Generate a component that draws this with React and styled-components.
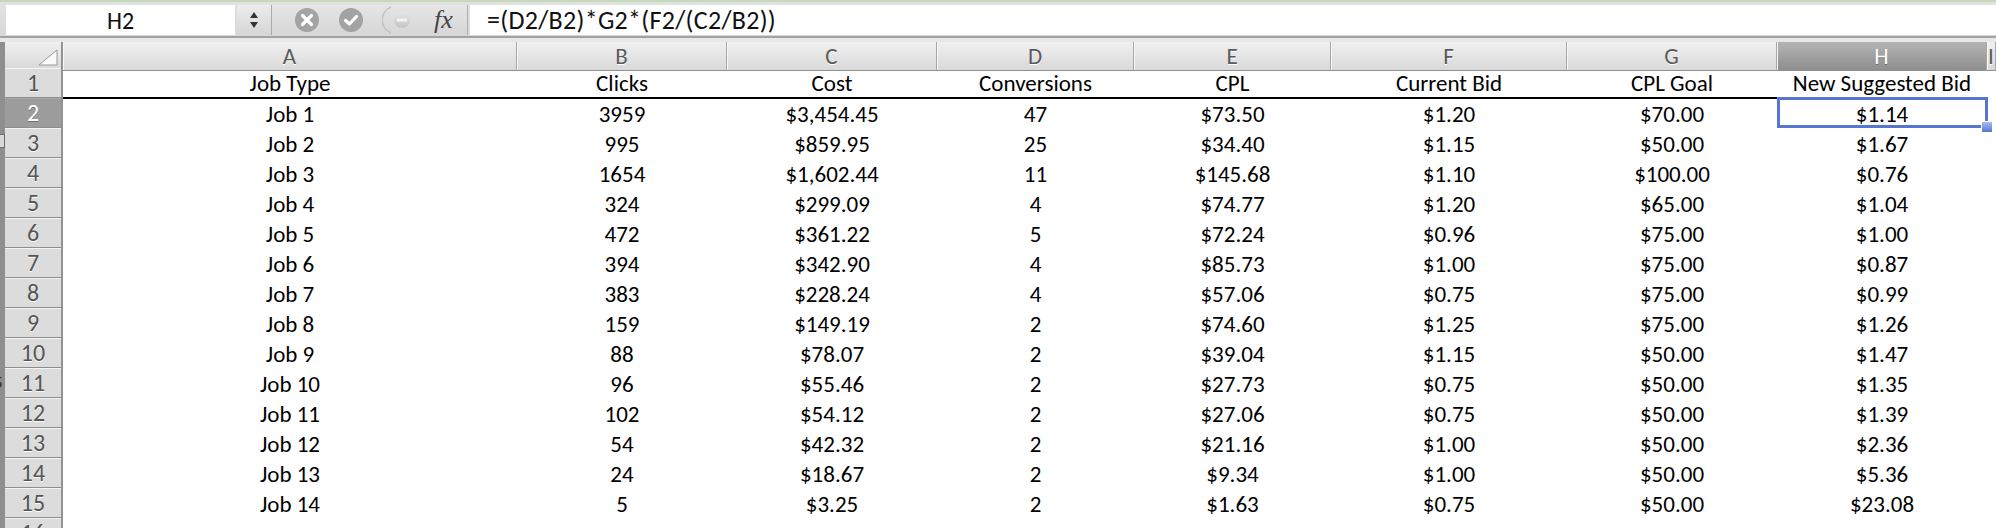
import React from 'react';
import styled, { createGlobalStyle } from 'styled-components';

const GlobalStyle = createGlobalStyle`
  html, body {
    margin: 0;
    padding: 0;
    background: #fff;
    overflow: hidden;
  }
  body {
    font-family: Carlito, Calibri, Lato, "Liberation Sans", sans-serif;
  }
`;

const COLS = '58px 454px 210px 210px 197px 197px 236px 210px 210px 1fr';

const columns = ['A', 'B', 'C', 'D', 'E', 'F', 'G', 'H', 'I'];

const headers = ['Job Type', 'Clicks', 'Cost', 'Conversions', 'CPL', 'Current Bid', 'CPL Goal', 'New Suggested Bid'];

const data = [
    ['Job 1', '3959', '$3,454.45', '47', '$73.50', '$1.20', '$70.00', '$1.14'],
    ['Job 2', '995', '$859.95', '25', '$34.40', '$1.15', '$50.00', '$1.67'],
    ['Job 3', '1654', '$1,602.44', '11', '$145.68', '$1.10', '$100.00', '$0.76'],
    ['Job 4', '324', '$299.09', '4', '$74.77', '$1.20', '$65.00', '$1.04'],
    ['Job 5', '472', '$361.22', '5', '$72.24', '$0.96', '$75.00', '$1.00'],
    ['Job 6', '394', '$342.90', '4', '$85.73', '$1.00', '$75.00', '$0.87'],
    ['Job 7', '383', '$228.24', '4', '$57.06', '$0.75', '$75.00', '$0.99'],
    ['Job 8', '159', '$149.19', '2', '$74.60', '$1.25', '$75.00', '$1.26'],
    ['Job 9', '88', '$78.07', '2', '$39.04', '$1.15', '$50.00', '$1.47'],
    ['Job 10', '96', '$55.46', '2', '$27.73', '$0.75', '$50.00', '$1.35'],
    ['Job 11', '102', '$54.12', '2', '$27.06', '$0.75', '$50.00', '$1.39'],
    ['Job 12', '54', '$42.32', '2', '$21.16', '$1.00', '$50.00', '$2.36'],
    ['Job 13', '24', '$18.67', '2', '$9.34', '$1.00', '$50.00', '$5.36'],
    ['Job 14', '5', '$3.25', '2', '$1.63', '$0.75', '$50.00', '$23.08'],
];

const App = () => {
    return (
        <React.Fragment>
            <GlobalStyle />
            <Window>
                <FormulaBar>
                    <NameBox>H2</NameBox>
                    <Stepper>
                        <svg width="12" height="22" viewBox="0 0 12 22">
                            <path d="M6 3 L10 9 L2 9 Z" fill="#333" />
                            <path d="M6 19 L10 13 L2 13 Z" fill="#333" />
                        </svg>
                    </Stepper>
                    <Tools>
                        <svg width="26" height="26" viewBox="0 0 26 26">
                            <circle cx="13" cy="13" r="12" fill="#a3a3a3" />
                            <path d="M8.5 8.5 L17.5 17.5 M17.5 8.5 L8.5 17.5" stroke="#fff" strokeWidth="3.2" strokeLinecap="round" />
                        </svg>
                        <svg width="26" height="26" viewBox="0 0 26 26">
                            <circle cx="13" cy="13" r="12" fill="#a3a3a3" />
                            <path d="M7.5 13.5 L11.5 17 L18.5 9.5" stroke="#fff" strokeWidth="3.2" fill="none" strokeLinecap="round" strokeLinejoin="round" />
                        </svg>
                        <svg width="32" height="30" viewBox="0 0 32 30">
                            <defs>
                                <linearGradient id="dim" x1="0" y1="0" x2="0" y2="1">
                                    <stop offset="0" stopColor="#e6e6e6" />
                                    <stop offset="1" stopColor="#c4c4c4" />
                                </linearGradient>
                            </defs>
                            <path d="M9 2 A14 14 0 0 0 9 28" stroke="#c2c2c2" strokeWidth="1.6" fill="none" />
                            <circle cx="20" cy="15" r="8" fill="url(#dim)" />
                            <rect x="15" y="13.5" width="10" height="3" fill="#f4f4f4" />
                        </svg>
                        <Fx>fx</Fx>
                    </Tools>
                    <FormulaInput>=(D2/B2)*G2*(F2/(C2/B2))</FormulaInput>
                </FormulaBar>
                <Divider />
                <Sheet>
                    <LeftEdge>
                        <Notch />
                        <Peek>s</Peek>
                    </LeftEdge>
                    <Grid>
                        <Row $header>
                            <Corner>
                                <svg width="22" height="18" viewBox="0 0 22 18">
                                    <path d="M20 1 L20 16 L2 16 Z" fill="#fafafa" stroke="#9a9a9a" strokeWidth="1" />
                                </svg>
                            </Corner>
                            {columns.map((c) => (
                                <ColHeader key={c} $selected={c === 'H'}>{c}</ColHeader>
                            ))}
                        </Row>
                        <Row>
                            <RowHeader>1</RowHeader>
                            {headers.map((h) => (
                                <Cell key={h} $underline>{h}</Cell>
                            ))}
                            <Cell />
                        </Row>
                        {data.map((r, i) => (
                            <Row key={i}>
                                <RowHeader $selected={i === 0}>{i + 2}</RowHeader>
                                {r.map((v, j) => (
                                    <Cell key={j}>{v}</Cell>
                                ))}
                                <Cell />
                            </Row>
                        ))}
                        <Row>
                            <RowHeader>16</RowHeader>
                        </Row>
                        <Selection>
                            <FillHandle />
                        </Selection>
                    </Grid>
                </Sheet>
            </Window>
        </React.Fragment>
    );
};

const Window = styled.div`
    width: 1996px;
    height: 528px;
    overflow: hidden;
    display: flex;
    flex-direction: column;
    background: #fff;
`;

const FormulaBar = styled.div`
    height: 36px;
    box-sizing: border-box;
    display: flex;
    align-items: stretch;
    padding: 3px 0 1px 6px;
    border-top: 2px solid #c4d8bb;
    background: linear-gradient(#e2e2e2, #d8d8d8);
`;

const NameBox = styled.div`
    width: 229px;
    background: #fff;
    display: flex;
    align-items: center;
    justify-content: center;
    font-size: 24px;
    color: #111;
`;

const Stepper = styled.div`
    width: 34px;
    margin-left: 2px;
    display: flex;
    align-items: center;
    justify-content: center;
    background: linear-gradient(#ececec, #d6d6d6);
    border-right: 1px solid #a9a9a9;
`;

const Tools = styled.div`
    width: 196px;
    display: flex;
    align-items: center;
    gap: 18px;
    padding-left: 22px;
    box-sizing: border-box;
    border-right: 1px solid #b0b0b0;
    background: linear-gradient(#e6e6e6, #d6d6d6);
`;

const Fx = styled.span`
    font-family: "Liberation Serif", "DejaVu Serif", serif;
    font-style: italic;
    font-size: 26px;
    color: #444;
    margin-left: 2px;
`;

const FormulaInput = styled.div`
    flex: 1;
    margin-left: 2px;
    background: #fff;
    display: flex;
    align-items: center;
    padding-left: 17px;
    font-size: 26px;
    letter-spacing: 0.3px;
    color: #111;
`;

const Divider = styled.div`
    height: 6px;
    border-top: 2px solid #a2a2a2;
    box-sizing: border-box;
    background: #e8e8e8;
`;

const Sheet = styled.div`
    flex: 1;
    display: flex;
    min-height: 0;
`;

const LeftEdge = styled.div`
    width: 5px;
    background: #8f8f8f;
    flex-shrink: 0;
    position: relative;
    overflow: hidden;
`;

const Notch = styled.div`
    position: absolute;
    left: -3px;
    top: 92px;
    width: 6px;
    height: 12px;
    border: 1px solid #6a6a6a;
    background: #d8d8d8;
`;

const Peek = styled.span`
    position: absolute;
    left: -7px;
    top: 326px;
    font-size: 24px;
    color: #3a3a3a;
    line-height: 1;
`;

const Grid = styled.div`
    flex: 1;
    position: relative;
`;

const Row = styled.div`
    display: grid;
    grid-template-columns: ${COLS};
    height: ${(p) => (p.$header ? '26px' : '30px')};
`;

const Corner = styled.div`
    background: linear-gradient(#f0f0f0, #d8d8d8);
    border-right: 2px solid #939393;
    border-bottom: 1px solid #8f8f8f;
    display: flex;
    align-items: flex-end;
    justify-content: flex-end;
    padding: 0 2px 3px 0;
`;

const ColHeader = styled.div`
    display: flex;
    align-items: center;
    justify-content: center;
    font-size: 23px;
    color: ${(p) => (p.$selected ? '#fff' : '#5a5a5a')};
    text-shadow: ${(p) => (p.$selected ? '0 1px 0 #6f6f6f' : '0 1px 0 #fff')};
    background: ${(p) => (p.$selected
        ? 'linear-gradient(#b4b4b4, #8e8e8e)'
        : 'linear-gradient(#f0f0f0, #d9d9d9)')};
    border-right: 1px solid #a6a6a6;
    border-bottom: 1px solid #8f8f8f;
    box-shadow: inset 1px 0 0 #f8f8f8;
`;

const RowHeader = styled.div`
    display: flex;
    align-items: center;
    justify-content: center;
    font-size: 24px;
    color: ${(p) => (p.$selected ? '#fff' : '#555')};
    text-shadow: ${(p) => (p.$selected ? '0 1px 0 #6f6f6f' : '0 1px 0 #fff')};
    background: ${(p) => (p.$selected ? '#9c9c9c' : '#dcdcdc')};
    border-right: 2px solid #939393;
    border-bottom: 2px solid #8e8e8e;
    box-shadow: inset 0 1px 0 ${(p) => (p.$selected ? '#a8a8a8' : '#f4f4f4')};
`;

const Cell = styled.div`
    display: flex;
    align-items: center;
    justify-content: center;
    font-size: 23px;
    color: #000;
    white-space: nowrap;
    border-bottom: ${(p) => (p.$underline ? '2px solid #000' : 'none')};
`;

const Selection = styled.div`
    position: absolute;
    left: 1772px;
    top: 55px;
    width: 211px;
    height: 31px;
    box-sizing: border-box;
    border: 3px solid #5676d2;
    pointer-events: none;
`;

const FillHandle = styled.div`
    position: absolute;
    right: -8px;
    bottom: -8px;
    width: 10px;
    height: 10px;
    background: linear-gradient(#a9bbef, #5676d2);
    border: 1px solid #fff;
`;

export default App;
